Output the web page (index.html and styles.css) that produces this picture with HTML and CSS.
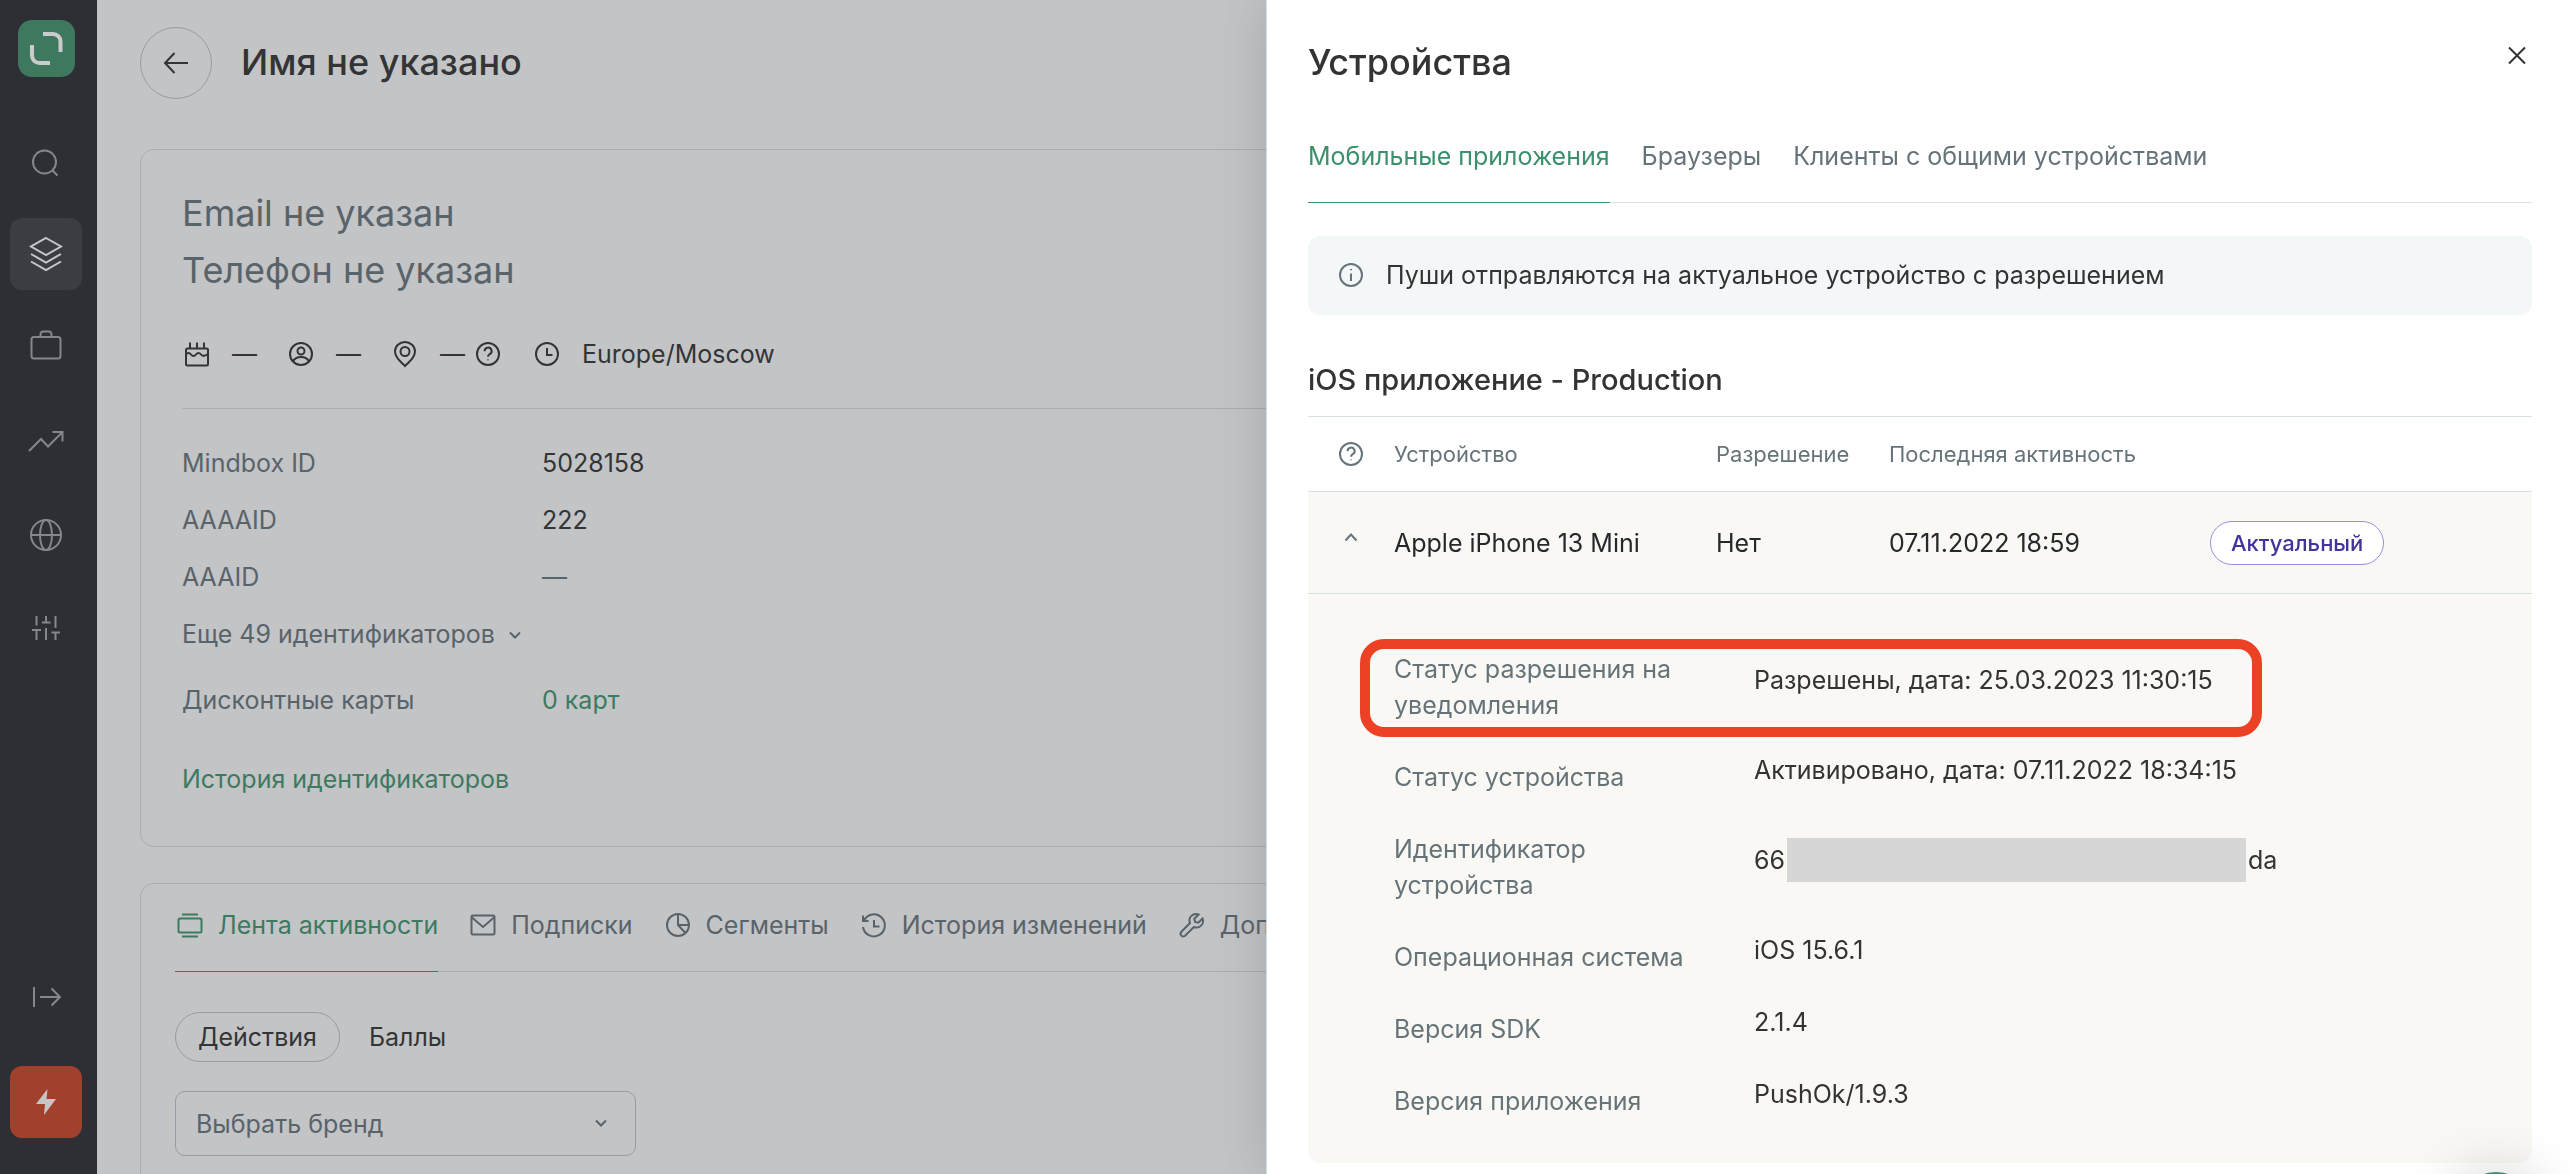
FILE: index.html
```html
<!DOCTYPE html>
<html lang="ru">
<head>
<meta charset="utf-8">
<title>Имя не указано</title>
<meta name="viewport" content="width=device-width, initial-scale=1">
<link rel="stylesheet" href="styles.css">
</head>
<body>
<svg class="sprite" aria-hidden="true">
  <symbol id="help" viewBox="0 0 30 30"><circle cx="15" cy="15" r="11"/><path d="M11.600 12.200a3.500 3.500 0 1 1 5.200 3c-1.200.7-1.800 1.300-1.800 2.600"/><path d="M15 20.600v.6"/></symbol>
  <symbol id="chevron" viewBox="0 0 20 20"><path d="M5 7.500l5 5 5-5"/></symbol>
</svg>
<div class="app">
  <nav class="sidebar" aria-label="Основное меню">
    <a class="logo" href="#" aria-label="Mindbox"><svg viewBox="0 0 57 57"><path d="M25 14h10a7.500 7.500 0 0 1 7.500 7.500V32M14 25v10.500a7.500 7.500 0 0 0 7.500 7.500H32"/></svg></a>
    <div class="menu">
      <a class="item" href="#" aria-label="Поиск"><svg viewBox="0 0 36 36"><circle cx="16.500" cy="20" r="11.500"/><path d="M24.500 28.500l5 5"/></svg></a>
      <a class="item active" href="#" aria-label="Клиенты"><svg viewBox="0 0 36 36"><path d="M18 2l15 8.500-15 8.500-15-8.500zM3 18l15 8.500L33 18M3 25.500L18 34l15-8.500"/></svg></a>
      <a class="item" href="#" aria-label="Кампании"><svg viewBox="0 0 36 36"><rect x="3.500" y="7" width="29" height="21.500" rx="2.500"/><path d="M12.500 7V4.500a3 3 0 0 1 3-3h5a3 3 0 0 1 3 3V7"/></svg></a>
      <a class="item" href="#" aria-label="Отчеты"><svg viewBox="0 0 36 36"><path d="M1 27L13 15l7 7.500L34.500 8M24.500 8h10v9.500"/></svg></a>
      <a class="item" href="#" aria-label="Интеграции"><svg viewBox="0 0 36 36"><circle cx="18" cy="17" r="15"/><ellipse cx="18" cy="17" rx="6" ry="15"/><path d="M3 17h30"/></svg></a>
      <a class="item" href="#" aria-label="Настройки"><svg viewBox="0 0 36 36"><path d="M8.500 4v9.500M18 4v6.500M27.500 4v12M4 18h9M14 10.500h8.500M23.500 20.500H32M8.500 18v10M18 16v12M27.500 20.500V28"/></svg></a>
    </div>
    <div class="menu menu-bottom">
      <a class="item" href="#" aria-label="Развернуть"><svg viewBox="0 0 36 36"><path d="M6 8v20M12 18h20M23.500 9.500l8.500 8.500-8.500 8.500"/></svg></a>
      <button class="bolt" aria-label="Быстрые действия"><svg viewBox="0 0 36 36"><path d="M19.500 5L8 20h9l-1 11 12-16h-9.500z"/></svg></button>
    </div>
  </nav>

  <main class="main">
    <header class="page-head">
      <button class="back" aria-label="Назад"><svg class="icon" viewBox="0 0 30 30"><path d="M27 15H4M13.500 5L4 15l9.500 10"/></svg></button>
      <h1 class="title">Имя не указано</h1>
    </header>

    <section class="card profile">
      <p class="contact">Email не указан</p>
      <p class="contact">Телефон не указан</p>
      <div class="facts">
        <span class="fact"><svg class="icon" viewBox="0 0 30 30"><rect x="4" y="9.500" width="22" height="17" rx="1.500"/><path d="M4 15.500c1.500-2 3.500-2 5 0s3.500 2 5 0 3.500-2 5 0 3.500 2 7-.5M8 9V3.500M15 9V3.500M22 9V3.500"/></svg>—</span>
        <span class="fact"><svg class="icon" viewBox="0 0 30 30"><circle cx="15" cy="15" r="11"/><circle cx="15" cy="12" r="3.500"/><path d="M7 22.500c1.500-3 4.500-4.500 8-4.500s6.500 1.500 8 4.500"/></svg>—</span>
        <span class="fact"><svg class="icon" viewBox="0 0 30 30"><path d="M15 27C9 21 5 17.500 5 12.500a10 9.500 0 0 1 20 0C25 17.500 21 21 15 27z"/><circle cx="15" cy="12.500" r="4.500"/></svg><span class="hinted">—<svg class="icon"><use href="#help"/></svg></span></span>
        <span class="fact"><svg class="icon" viewBox="0 0 30 30"><circle cx="15" cy="15" r="11"/><path d="M15 9v7h5.500"/></svg>Europe/Moscow</span>
      </div>
      <dl class="ids">
        <div class="id-row"><dt>Mindbox ID</dt><dd>5028158</dd></div>
        <div class="id-row"><dt>AAAAID</dt><dd>222</dd></div>
        <div class="id-row"><dt>AAAID</dt><dd class="muted">—</dd></div>
      </dl>
      <button class="more">Еще 49 идентификаторов<svg class="chevron"><use href="#chevron"/></svg></button>
      <dl class="cards">
        <div class="id-row"><dt>Дисконтные карты</dt><dd><a href="#">0 карт</a></dd></div>
      </dl>
      <a class="history" href="#">История идентификаторов</a>
    </section>

    <section class="card activity">
      <div class="tabs" role="tablist">
        <button class="tab active" role="tab"><svg class="icon" viewBox="0 0 30 30"><rect x="3.500" y="8.500" width="23" height="14" rx="1.500"/><path d="M7 4.500h16M7 26.500h16"/></svg>Лента активности</button>
        <button class="tab" role="tab"><svg class="icon" viewBox="0 0 30 30"><rect x="3.500" y="5.500" width="23" height="19" rx="1.500"/><path d="M4 7.500l11 9.500 11-9.500"/></svg>Подписки</button>
        <button class="tab" role="tab"><svg class="icon" viewBox="0 0 30 30"><circle cx="15" cy="15" r="11"/><path d="M15 4v11l7.500 8M15 15h11"/></svg>Сегменты</button>
        <button class="tab" role="tab"><svg class="icon" viewBox="0 0 30 30"><path d="M5 10.500A11 11 0 1 1 4 17M4 5.500v5.500h5.500M15 10v6.500h5.500"/></svg>История изменений</button>
        <button class="tab" role="tab"><svg class="icon" viewBox="0 0 30 30"><path d="M21.500 4.500a6.500 6.500 0 0 0-8.500 8.500L4.200 22a2.700 2.700 0 0 0 3.800 3.800l9-8.800a6.500 6.500 0 0 0 8.500-8.500l-4.200 4.200-3.200-.8-.8-3.200z"/></svg>Дополнительные поля</button>
      </div>
      <div class="pills">
        <button class="pill active">Действия</button>
        <button class="pill">Баллы</button>
      </div>
      <div class="select">
        <select aria-label="Бренд"><option>Выбрать бренд</option></select>
        <svg class="chevron"><use href="#chevron"/></svg>
      </div>
    </section>
  </main>
</div>

<aside class="drawer" role="dialog" aria-labelledby="drawer-title">
  <header class="drawer-head">
    <h2 class="drawer-title" id="drawer-title">Устройства</h2>
    <button class="close" aria-label="Закрыть"><svg class="icon" viewBox="0 0 30 30"><path d="M7 7.500l16 16M23 7.500l-16 16"/></svg></button>
  </header>
  <div class="tabs drawer-tabs" role="tablist">
    <button class="tab active" role="tab">Мобильные приложения</button>
    <button class="tab" role="tab">Браузеры</button>
    <button class="tab" role="tab">Клиенты с общими устройствами</button>
  </div>
  <p class="notice"><svg class="icon" viewBox="0 0 30 30"><circle cx="15" cy="15" r="11"/><path d="M15 13.500V21M15 9v1.200"/></svg>Пуши отправляются на актуальное устройство с разрешением</p>
  <h3 class="app-name">iOS приложение - Production</h3>
  <table class="devices">
    <colgroup><col class="c-icon"><col class="c-device"><col class="c-perm"><col class="c-last"><col></colgroup>
    <thead>
      <tr><th><svg class="icon"><use href="#help"/></svg></th><th>Устройство</th><th>Разрешение</th><th>Последняя активность</th><th></th></tr>
    </thead>
    <tbody>
      <tr class="device">
        <td><button class="toggle" aria-label="Свернуть"><svg class="icon" viewBox="0 0 30 30"><path d="M9.500 12.500l5.500-6 5.500 6"/></svg></button></td>
        <td>Apple iPhone 13 Mini</td><td>Нет</td><td>07.11.2022 18:59</td>
        <td><span class="badge">Актуальный</span></td>
      </tr>
      <tr>
        <td class="details" colspan="5">
          <dl class="props">
            <div class="prop marked"><dt>Статус разрешения на уведомления</dt><dd>Разрешены, дата: 25.03.2023 11:30:15</dd></div>
            <div class="prop"><dt>Статус устройства</dt><dd>Активировано, дата: 07.11.2022 18:34:15</dd></div>
            <div class="prop"><dt>Идентификатор устройства</dt><dd>66<span class="redacted"></span>da</dd></div>
            <div class="prop"><dt>Операционная система</dt><dd>iOS 15.6.1</dd></div>
            <div class="prop"><dt>Версия SDK</dt><dd>2.1.4</dd></div>
            <div class="prop"><dt>Версия приложения</dt><dd>PushOk/1.9.3</dd></div>
          </dl>
        </td>
      </tr>
    </tbody>
  </table>
</aside>
<button class="chat" aria-label="Чат поддержки"></button>
</body>
</html>
```
FILE: styles.css
```css
*, *::after { box-sizing: border-box; margin: 0; padding: 0; }

body {
  font: 400 25px/36px Inter, "Liberation Sans", sans-serif;
  color: #333436;
  background: #c3c4c6;
  height: 100vh;
  overflow: hidden;
}

button, select { font: inherit; color: inherit; background: none; border: 0; cursor: pointer; }
a { color: inherit; text-decoration: none; }

svg { display: block; flex: none; fill: none; stroke: currentColor; stroke-width: 2; }
.sprite { position: absolute; width: 0; height: 0; }
.icon { width: 30px; height: 30px; }
.chevron { width: 20px; height: 20px; }

.app { display: flex; height: 100vh; }

/* Sidebar */
.sidebar {
  flex: none;
  width: 97px;
  padding: 20px 15px 36px 10px;
  background: #2e2f34;
  color: #85878a;
  display: flex;
  flex-direction: column;
  align-items: center;
}
.logo { width: 57px; height: 57px; border-radius: 14px; background: #3e795f; color: #c9cbcc; }
.logo svg { stroke-width: 4; }
.menu { display: flex; flex-direction: column; gap: 22px; margin-top: 47px; }
.menu-bottom { margin-top: auto; gap: 33px; }
.item, .bolt {
  width: 72px;
  height: 72px;
  border-radius: 12px;
  display: grid;
  place-items: center;
}
.item svg, .bolt svg { width: 36px; height: 36px; }
.item.active { background: #3a3e43; color: #c6c8ca; }
.bolt { background: #a1402c; color: #c6c6c6; }
.bolt svg { fill: currentColor; stroke: none; }

/* Client page */
.main { flex: 1; min-width: 0; padding: 27px 43px 0; overflow: hidden; }
.page-head { display: flex; align-items: center; gap: 29px; margin-bottom: 50px; }
.back {
  width: 72px;
  height: 72px;
  border: 1px solid #959ca5;
  border-radius: 50%;
  display: grid;
  place-items: center;
}
.title { padding-bottom: 2px; font-size: 36px; line-height: 44px; font-weight: 500; }

.card { border: 1px solid #abadb0; border-radius: 14px; }
.profile { padding: 35px 41px 38px; margin-bottom: 36px; }
.contact { font-size: 36px; line-height: 57px; color: #59636a; }
.facts { display: flex; gap: 29px; margin-top: 37px; padding-bottom: 36px; border-bottom: 1px solid #abadb0; }
.fact { display: flex; align-items: center; gap: 20px; }
.hinted { display: flex; align-items: center; gap: 8px; }

.ids { margin-top: 26px; }
.id-row { display: grid; grid-template-columns: 360px 1fr; line-height: 57px; }
.id-row dt, .muted { color: #59636a; }
.more { display: flex; align-items: center; gap: 10px; line-height: 57px; color: #59636a; }
.cards { margin-top: 9px; }
.cards a, .history { color: #3d7a60; }
.history { display: block; margin-top: 22px; line-height: 57px; }

.tabs { display: flex; gap: 30px; white-space: nowrap; border-bottom: 1px solid #abadb0; }
.tab {
  display: flex;
  align-items: center;
  gap: 13px;
  padding-bottom: 28px;
  margin-bottom: -1px;
  border-bottom: 1px solid transparent;
  color: #59636a;
}
.tab.active { color: #3d7a60; border-color: currentColor; }

.activity { padding: 23px 34px 40px; }
.pills { display: flex; gap: 6px; margin-top: 40px; }
.pill { height: 50px; padding: 0 22px; border: 1px solid transparent; border-radius: 25px; }
.pill.active { border-color: #959ca5; }
.select { position: relative; width: 461px; margin-top: 29px; color: #59636a; }
.select select {
  appearance: none;
  width: 100%;
  height: 65px;
  padding: 0 20px;
  border: 1px solid #959ca5;
  border-radius: 10px;
}
.select .chevron { position: absolute; right: 25px; top: 22px; pointer-events: none; }

/* Drawer with the client's devices */
.drawer {
  position: fixed;
  top: 0;
  right: 0;
  bottom: 0;
  width: calc(50% + 19px);
  padding: 40px 38px 0 41px;
  background: #fff;
  color: #333;
  border-left: 1px solid #d3dce2;
  box-shadow: 0 0 48px rgba(60, 62, 70, .22);
  overflow: hidden;
}
.drawer-head { display: flex; justify-content: space-between; align-items: flex-start; }
.drawer-title { font-size: 36px; line-height: 44px; font-weight: 500; }
.drawer-tabs { gap: 32px; padding-top: 54px; border-color: #d8e1e2; }
.drawer .tab { color: #66747a; }
.drawer .tab.active { color: #3c8f6b; }
.notice {
  display: flex;
  align-items: center;
  gap: 20px;
  margin-top: 33px;
  padding: 21px 28px 22px;
  border-radius: 12px;
  background: #f4f7f8;
}
.notice .icon, th .icon, .toggle { color: #66747a; }
.app-name { margin: 47px 0 18px; font-size: 29px; line-height: 36px; font-weight: 500; }

.devices { width: 100%; table-layout: fixed; border-spacing: 0; border-top: 1px solid #d8e1e4; }
.c-icon { width: 86px; }
.c-device { width: 322px; }
.c-perm { width: 173px; }
.c-last { width: 321px; }
th { height: 75px; text-align: left; font-size: 22px; font-weight: 400; color: #66747a; border-bottom: 1px solid #d8e1e4; }
th .icon, .toggle { margin-left: 28px; }
.device td { height: 102px; background: #f9f8f5; color: #27282c; border-bottom: 1px solid #d8e1e4; }
.toggle { display: block; }
.badge {
  display: inline-block;
  padding: 3px 20px;
  border: 1px solid #9b8fdc;
  border-radius: 22px;
  background: #fff;
  color: #41349b;
  font-size: 22px;
  font-weight: 500;
}
.details { padding: 39px 86px 26px; background: #f9f8f5; border-radius: 0 0 12px 12px; }
.prop { position: relative; display: grid; grid-template-columns: 300px 1fr; column-gap: 60px; align-items: center; padding: 18px 0; }
.prop dt { color: #66747a; }
.prop dd { display: flex; align-items: center; padding-bottom: 14px; line-height: 22px; }
.redacted { width: 459px; height: 44px; margin: 0 2px; background: #d6d6d6; }
.marked::after {
  content: "";
  position: absolute;
  inset: 6px auto 4px -34px;
  width: 902px;
  border: 10px solid #ed4126;
  border-radius: 24px;
}

.chat {
  position: fixed;
  right: 34px;
  bottom: -78px;
  width: 80px;
  height: 80px;
  border-radius: 50%;
  background: #3c8f6b;
  box-shadow: 0 0 60px rgba(0, 0, 0, .2);
}
```
